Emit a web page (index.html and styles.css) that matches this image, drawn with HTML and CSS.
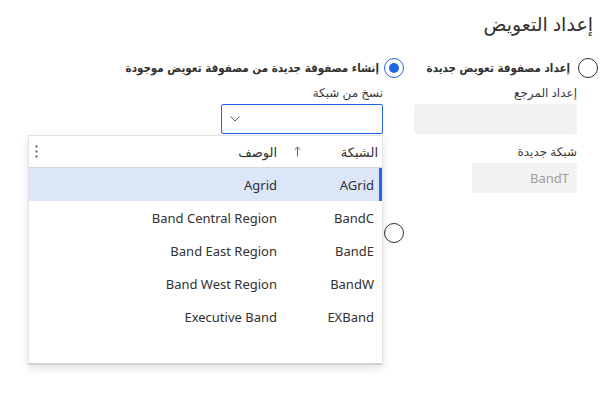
FILE: index.html
```html
<!DOCTYPE html>
<html lang="ar" dir="rtl">
<head>
<meta charset="utf-8">
<title>إعداد التعويض</title>
<link rel="stylesheet" href="styles.css">
</head>
<body>
<main class="page">
  <h1 class="title">إعداد التعويض</h1>
  <div class="options">
    <section class="col col-new">
      <div class="radio-row">
        <span class="radio"></span>
        <span class="radio-label">إعداد مصفوفة تعويض جديدة</span>
      </div>
      <div class="fields">
        <div class="field">
          <div class="field-label">إعداد المرجع</div>
          <div class="input input-wide"></div>
        </div>
        <div class="field">
          <div class="field-label">شبكة جديدة</div>
          <div class="input input-narrow">BandT</div>
        </div>
      </div>
    </section>
    <section class="col col-copy">
      <div class="radio-row radio-row-tight">
        <span class="radio radio-on"></span>
        <span class="radio-label">إنشاء مصفوفة جديدة من مصفوفة تعويض موجودة</span>
      </div>
      <div class="fields">
        <div class="field">
          <div class="field-label">نسخ من شبكة</div>
          <div class="combo-wrap">
            <div class="combo">
              <svg class="chevron" width="10" height="6" viewBox="0 0 10 6"><path d="M0.5 0.5 L5 5 L9.5 0.5" fill="none" stroke="#605e5c" stroke-width="1"/></svg>
            </div>
            <div class="popup">
              <div class="grid-head">
                <div class="th th-net">
                  <span>الشبكة</span>
                  <svg class="sort" width="7" height="11" viewBox="0 0 7 11"><path d="M3.5 10.5 V1 M0.8 3.7 L3.5 1 L6.2 3.7" fill="none" stroke="#605e5c" stroke-width="1"/></svg>
                </div>
                <div class="th th-desc">الوصف</div>
                <div class="th th-more">
                  <svg width="3" height="13" viewBox="0 0 3 13"><rect x="0.5" y="0.5" width="2" height="2" fill="#605e5c"/><rect x="0.5" y="5.5" width="2" height="2" fill="#605e5c"/><rect x="0.5" y="10.5" width="2" height="2" fill="#605e5c"/></svg>
                </div>
              </div>
              <div class="grid-row selected"><span class="td td-net">AGrid</span><span class="td">Agrid</span></div>
              <div class="grid-row"><span class="td td-net">BandC</span><span class="td">Band Central Region</span></div>
              <div class="grid-row"><span class="td td-net">BandE</span><span class="td">Band East Region</span></div>
              <div class="grid-row"><span class="td td-net">BandW</span><span class="td">Band West Region</span></div>
              <div class="grid-row"><span class="td td-net">EXBand</span><span class="td">Executive Band</span></div>
            </div>
          </div>
        </div>
      </div>
      <div class="radio-row radio-extra">
        <span class="radio"></span>
      </div>
    </section>
  </div>
</main>
</body>
</html>
```
FILE: styles.css
```css
html, body {
  margin: 0;
  background: #ffffff;
}
body {
  min-height: 100vh;
  font-family: "Noto Sans", "DejaVu Sans", sans-serif;
  color: #323130;
}
.page {
  box-sizing: border-box;
  min-height: 412px;
  padding: 10px 3px 0 0;
}
.title {
  margin: 0;
  padding-right: 5px;
  font-size: 19px;
  font-weight: normal;
  line-height: 28px;
  height: 28px;
}
.options {
  display: flex;
  gap: 10px;
  margin-top: 20px;
}
.col {
  display: flex;
  flex-direction: column;
}
.col-new {
  width: 184px;
}
.col-copy {
  width: 277px;
}
.radio-row {
  display: flex;
  align-items: center;
  gap: 8px;
  height: 20px;
}
.radio-row-tight {
  gap: 5px;
}
.radio {
  box-sizing: border-box;
  width: 20px;
  height: 20px;
  border: 1px solid #323130;
  border-radius: 50%;
  flex: none;
  display: flex;
  align-items: center;
  justify-content: center;
}
.radio-on {
  border-color: #2266e3;
}
.radio-on::after {
  content: "";
  width: 10px;
  height: 10px;
  border-radius: 50%;
  background: #2266e3;
}
.radio-label {
  font-family: "DejaVu Sans Condensed", "DejaVu Sans", sans-serif;
  font-size: 11.5px;
  font-weight: bold;
  white-space: nowrap;
}
.fields {
  display: flex;
  flex-direction: column;
  gap: 10px;
  padding-top: 7px;
  padding-right: 21px;
}
.field-label {
  font-size: 12px;
  line-height: 16px;
  color: #3b3a39;
  margin-bottom: 3px;
}
.input {
  box-sizing: border-box;
  height: 30px;
  background: #f3f2f1;
  border-radius: 2px;
  font-size: 13px;
  line-height: 30px;
  padding: 0 8px;
  color: #a19f9d;
}
.input-wide {
  width: 163px;
}
.input-narrow {
  width: 105px;
}
.combo-wrap {
  position: relative;
  width: 162px;
}
.combo {
  box-sizing: border-box;
  height: 30px;
  border: 1px solid #2266e3;
  border-radius: 2px;
  display: flex;
  align-items: center;
  justify-content: flex-end;
  padding-left: 8px;
}
.chevron {
  display: block;
}
.popup {
  position: absolute;
  top: 31px;
  right: 0;
  width: 355px;
  height: 230px;
  box-sizing: border-box;
  background: #ffffff;
  border: 1px solid #e6e4e2;
  border-bottom: 2px solid #d2d0ce;
  box-shadow: 0 3px 8px rgba(0, 0, 0, 0.12);
  z-index: 2;
}
.grid-head {
  display: grid;
  grid-template-columns: 96px 1fr 30px;
  height: 31px;
  border-bottom: 1px solid #d8d6d4;
  align-items: center;
  font-size: 13px;
}
.th-net {
  display: flex;
  justify-content: space-between;
  align-items: center;
  padding: 0 4px 0 8px;
}
.sort {
  display: block;
}
.th-desc {
  padding-right: 9px;
}
.th-more {
  display: flex;
  justify-content: flex-end;
  padding-left: 6px;
}
.th-more svg {
  display: block;
}
.grid-row {
  display: grid;
  grid-template-columns: 96px 1fr;
  height: 33px;
  align-items: center;
  font-size: 13px;
}
.grid-row.selected {
  background: #dbe6f9;
  box-shadow: inset -3px 0 0 #2266e3;
}
.td {
  padding-right: 9px;
  white-space: nowrap;
}
.td-net {
  padding-right: 8px;
}
.radio-extra {
  margin-top: 89px;
}
```
